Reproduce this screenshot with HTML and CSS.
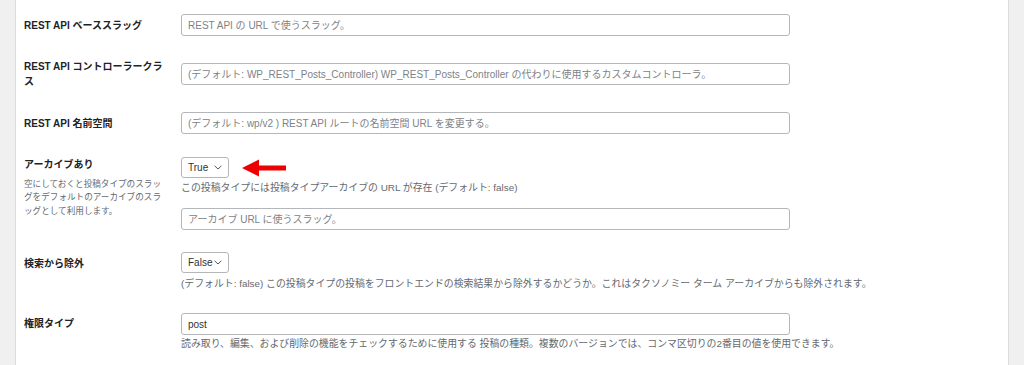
FILE: index.html
```html
<!DOCTYPE html>
<html lang="ja">
<head>
<meta charset="utf-8">
<title>投稿タイプ設定</title>
<link rel="stylesheet" href="styles.css">
</head>
<body>
<div class="panel">
  <div class="row">
    <div class="th"><label class="label">REST API ベーススラッグ</label></div>
    <div class="td"><input class="field" type="text" placeholder="REST API の URL で使うスラッグ。"></div>
  </div>
  <div class="row">
    <div class="th"><label class="label">REST API コントローラークラ<br>ス</label></div>
    <div class="td"><input class="field" type="text" placeholder="(デフォルト: WP_REST_Posts_Controller) WP_REST_Posts_Controller の代わりに使用するカスタムコントローラ。"></div>
  </div>
  <div class="row">
    <div class="th"><label class="label">REST API 名前空間</label></div>
    <div class="td"><input class="field" type="text" placeholder="(デフォルト: wp/v2 ) REST API ルートの名前空間 URL を変更する。"></div>
  </div>
  <div class="row row-archive">
    <div class="th">
      <label class="label">アーカイブあり</label>
      <p class="th-desc">空にしておくと投稿タイプのスラッ<br>グをデフォルトのアーカイブのスラ<br>ッグとして利用します。</p>
    </div>
    <div class="td">
      <div class="select-line">
        <div class="select"><span>True</span><svg class="chev" width="8" height="5" viewBox="0 0 8 5"><path d="M0.6 0.8 L4 4 L7.4 0.8" fill="none" stroke="#50575e" stroke-width="1"/></svg></div>
        <svg class="arrow" width="44" height="18" viewBox="0 0 44 18"><polygon points="0,9 17,0.6 17,6.4 44,6.4 44,11.6 17,11.6 17,17.4" fill="#ee0000"/></svg>
      </div>
      <p class="desc">この投稿タイプには投稿タイプアーカイブの URL が存在 (デフォルト: false)</p>
      <input class="field field-gap" type="text" placeholder="アーカイブ URL に使うスラッグ。">
    </div>
  </div>
  <div class="row row-desc">
    <div class="th"><label class="label label-top">検索から除外</label></div>
    <div class="td">
      <div class="select-line">
        <div class="select"><span>False</span><svg class="chev" width="8" height="5" viewBox="0 0 8 5"><path d="M0.6 0.8 L4 4 L7.4 0.8" fill="none" stroke="#50575e" stroke-width="1"/></svg></div>
      </div>
      <p class="desc">(デフォルト: false) この投稿タイプの投稿をフロントエンドの検索結果から除外するかどうか。これはタクソノミー ターム アーカイブからも除外されます。</p>
    </div>
  </div>
  <div class="row row-desc row-last">
    <div class="th"><label class="label label-top2">権限タイプ</label></div>
    <div class="td">
      <input class="field" type="text" value="post">
      <p class="desc desc-tight">読み取り、編集、および削除の機能をチェックするために使用する 投稿の種類。複数のバージョンでは、コンマ区切りの2番目の値を使用できます。</p>
    </div>
  </div>
</div>
</body>
</html>
```

FILE: styles.css
```css
html, body {
  margin: 0;
  padding: 0;
  background: #f0f0f1;
  height: 100%;
}
body {
  padding-left: 15px;
  font-family: "Liberation Sans", "Noto Sans CJK JP", sans-serif;
  color: #1d2327;
}
.panel {
  box-sizing: border-box;
  width: 994px;
  min-height: 365px;
  background: #fff;
  border-left: 1px solid #dcdcde;
  border-right: 1px solid #dcdcde;
  padding-left: 8px;
}
.row {
  display: grid;
  grid-template-columns: 157px 609px;
  grid-template-rows: 22px;
  align-items: center;
  padding: 14px 0 13px;
}
.th {
  width: 145px;
}
.label {
  display: block;
  font-weight: 700;
  font-size: 10px;
  line-height: 15px;
  color: #1d2327;
  white-space: nowrap;
}
.field {
  display: block;
  box-sizing: border-box;
  width: 609px;
  height: 22px;
  margin: 0;
  border: 1px solid #b4b7ba;
  border-radius: 3px;
  padding: 0 6px;
  font-family: "Liberation Sans", "Noto Sans CJK JP", sans-serif;
  font-size: 10px;
  color: #2c3338;
  background: #fff;
  outline: none;
}
.field::placeholder {
  color: #7d8287;
  opacity: 1;
}
.row-archive {
  grid-template-rows: auto;
  align-items: start;
  padding: 10px 0 8px;
}
.th-desc {
  margin: 5.5px 0 0;
  font-size: 8.6px;
  line-height: 13.5px;
  color: #646970;
  white-space: nowrap;
}
.select-line {
  display: flex;
  align-items: center;
}
.select {
  box-sizing: border-box;
  width: 48px;
  height: 21px;
  border: 1px solid #b4b7ba;
  border-radius: 3px;
  padding: 0 6px;
  display: flex;
  align-items: center;
  justify-content: space-between;
  font-size: 10px;
  color: #2c3338;
  background: #fff;
}
.chev {
  display: block;
}
.arrow {
  display: block;
  margin-left: 13px;
}
.desc {
  margin: 3px 0 0;
  font-size: 9.9px;
  line-height: 13px;
  color: #646970;
  white-space: nowrap;
}
.field-gap {
  margin-top: 14px;
}
.row-desc {
  grid-template-rows: auto;
  align-items: start;
  padding: 14px 0 9.5px;
}
.row-desc .desc {
  margin-top: 3.5px;
}
.label-top {
  margin-top: 3.5px;
}
.label-top2 {
  margin-top: 2.5px;
}
.row-last .desc-tight {
  margin-top: 1.5px;
}
```
